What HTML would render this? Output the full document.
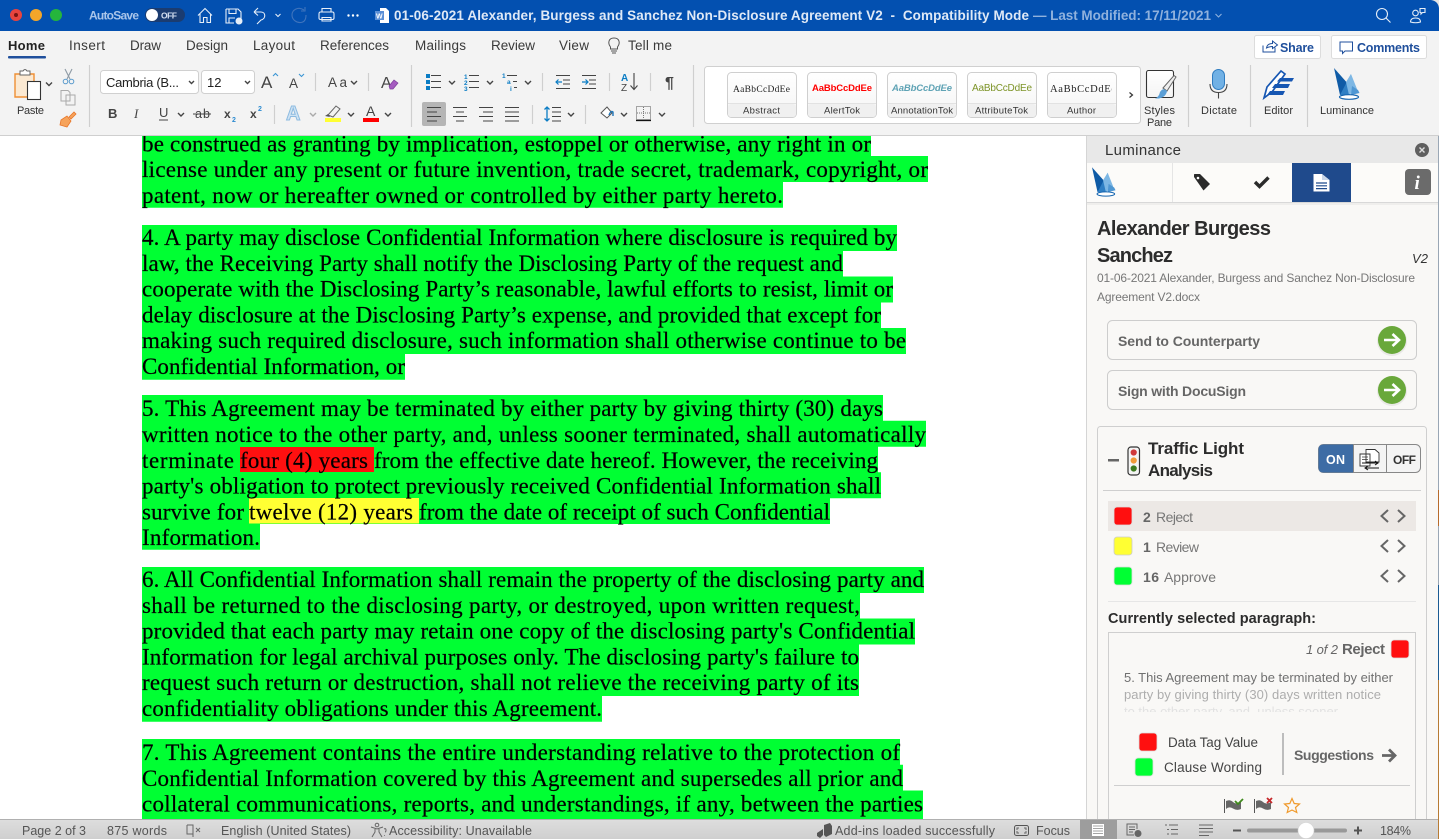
<!DOCTYPE html>
<html lang="en"><head><meta charset="utf-8"><title>Word</title>
<style>
html,body{margin:0;padding:0;background:#fff;overflow:hidden}
svg{display:block;position:absolute;left:0;top:0}
text{font-family:"Liberation Sans",Arial,sans-serif;white-space:pre}
.d{font-family:"Liberation Serif",serif;font-size:23px;fill:#000;stroke:#000;stroke-width:.2}
.t{font-size:13.5px;fill:#3a3a3a}
.r{font-size:10.5px;fill:#333}
.s{font-size:12.5px;fill:#555}
.b{font-weight:bold}
.i{font-style:italic}
.c{fill:none;stroke:#444;stroke-width:1.4}
.l{fill:none;stroke:#444;stroke-width:1.1}
.sep{stroke:#cfcfcf;stroke-width:1.2}
.w{fill:none;stroke:#e6eef8;stroke-width:1.1}
.ar{fill:none;stroke:#fff;stroke-width:2.6}
.nav{fill:none;stroke:#666;stroke-width:2}
.si{fill:none;stroke:#666;stroke-width:1}
</style></head><body>
<svg width="1439" height="839" viewBox="0 0 1439 839" xmlns="http://www.w3.org/2000/svg">
<defs>
<symbol id="logo" viewBox="0 0 26 32" overflow="visible">
<path d="M0 0L15 17 12 27 6 27Z" fill="#0f5ba6"/>
<path d="M6 27L17 6 16 27Z" fill="#2f7fc4"/>
<path d="M12 14L17 6 23 21 15 27Z" fill="#7db7e4"/>
<path d="M18 18L24 22 25.500 25 17 27Z" fill="#4f97d3"/>
<ellipse cx="15" cy="29" rx="9.500" ry="2.300" fill="#fff" stroke="#1766b0" stroke-width="1.200"/>
</symbol>
<linearGradient id="sb" x1="0" y1="0" x2="0" y2="1"><stop offset="0" stop-color="#dedede"/><stop offset="1" stop-color="#cfcfcf"/></linearGradient>
<linearGradient id="th" x1="0" y1="0" x2="0" y2="1"><stop offset="0" stop-color="#fff"/><stop offset="1" stop-color="#f4f4f4"/></linearGradient>
</defs>

<!-- document -->
<rect width="1087" height="839" fill="#fff"/>
<g fill="#00ff33">
<rect x="142" y="130" width="729" height="26"/><rect x="142" y="156" width="786" height="26"/><rect x="142" y="181.750" width="641" height="26"/>
<rect x="142" y="225" width="755" height="26"/><rect x="142" y="250.750" width="701" height="26"/><rect x="142" y="276.500" width="751" height="26"/><rect x="142" y="302.250" width="739" height="26"/><rect x="142" y="328" width="764" height="26"/><rect x="142" y="353.750" width="263" height="26"/>
<rect x="142" y="395" width="741" height="26"/><rect x="142" y="420.750" width="784" height="26"/><rect x="142" y="446.500" width="736" height="26"/><rect x="142" y="472.250" width="739" height="26"/><rect x="142" y="498" width="688" height="26"/><rect x="142" y="523.750" width="118" height="26"/>
<rect x="142" y="567" width="782" height="26"/><rect x="142" y="592.750" width="718" height="26"/><rect x="142" y="618.500" width="773" height="26"/><rect x="142" y="644.250" width="717" height="26"/><rect x="142" y="670" width="717" height="26"/><rect x="142" y="695.750" width="460" height="26"/>
<rect x="142" y="739" width="758" height="26"/><rect x="142" y="764.750" width="761" height="26"/><rect x="142" y="790.500" width="781" height="30"/>
</g>
<rect x="240" y="447" width="134" height="25" fill="#ff1010"/>
<rect x="249" y="498" width="170" height="25.500" fill="#ffff33"/>
<text class="d" x="142" y="151.250" textLength="729">be construed as granting by implication, estoppel or otherwise, any right in or</text>
<text class="d" x="142" y="177" textLength="786">license under any present or future invention, trade secret, trademark, copyright, or</text>
<text class="d" x="142" y="202.750" textLength="641">patent, now or hereafter owned or controlled by either party hereto.</text>
<text class="d" x="142" y="245" textLength="755">4. A party may disclose Confidential Information where disclosure is required by</text>
<text class="d" x="142" y="270.750" textLength="701">law, the Receiving Party shall notify the Disclosing Party of the request and</text>
<text class="d" x="142" y="296.500" textLength="751">cooperate with the Disclosing Party’s reasonable, lawful efforts to resist, limit or</text>
<text class="d" x="142" y="322.250" textLength="739">delay disclosure at the Disclosing Party’s expense, and provided that except for</text>
<text class="d" x="142" y="348" textLength="764">making such required disclosure, such information shall otherwise continue to be</text>
<text class="d" x="142" y="373.750" textLength="263">Confidential Information, or</text>
<text class="d" x="142" y="416" textLength="741">5. This Agreement may be terminated by either party by giving thirty (30) days</text>
<text class="d" x="142" y="441.750" textLength="784">written notice to the other party, and, unless sooner terminated, shall automatically</text>
<text class="d" x="142" y="468" textLength="92">terminate</text>
<text class="d" x="240" y="468" textLength="128">four (4) years</text>
<text class="d" x="374" y="468" textLength="504">from the effective date hereof. However, the receiving</text>
<text class="d" x="142" y="493.250" textLength="739">party's obligation to protect previously received Confidential Information shall</text>
<text class="d" x="142" y="519.500" textLength="102">survive for</text>
<text class="d" x="249" y="519.500" textLength="164">twelve (12) years</text>
<text class="d" x="419" y="519.500" textLength="411">from the date of receipt of such Confidential</text>
<text class="d" x="142" y="544.750" textLength="118">Information.</text>
<text class="d" x="142" y="587" textLength="782">6. All Confidential Information shall remain the property of the disclosing party and</text>
<text class="d" x="142" y="612.750" textLength="718">shall be returned to the disclosing party, or destroyed, upon written request,</text>
<text class="d" x="142" y="638.500" textLength="773">provided that each party may retain one copy of the disclosing party's Confidential</text>
<text class="d" x="142" y="664.250" textLength="717">Information for legal archival purposes only. The disclosing party's failure to</text>
<text class="d" x="142" y="690" textLength="717">request such return or destruction, shall not relieve the receiving party of its</text>
<text class="d" x="142" y="715.750" textLength="460">confidentiality obligations under this Agreement.</text>
<text class="d" x="142" y="760" textLength="758">7. This Agreement contains the entire understanding relative to the protection of</text>
<text class="d" x="142" y="785.750" textLength="761">Confidential Information covered by this Agreement and supersedes all prior and</text>
<text class="d" x="142" y="811.500" textLength="781">collateral communications, reports, and understandings, if any, between the parties</text>

<!-- title bar -->
<rect width="1439" height="31" fill="#0350b0"/>
<circle cx="16" cy="15" r="6" fill="#e8443e"/><circle cx="16" cy="15" r="2" fill="#7a1512"/>
<circle cx="36" cy="15" r="6" fill="#f4a62a"/><circle cx="56" cy="15" r="6" fill="#25b53c"/>
<text x="89" y="19.500" font-size="12" font-weight="bold" fill="#a9c5ea" textLength="50">AutoSave</text>
<rect x="145" y="8" width="40" height="14" rx="7" fill="#1b3c70"/><circle cx="152" cy="15" r="6" fill="#fff"/>
<text x="161" y="18.500" font-size="8.500" font-weight="bold" fill="#d5e0f0" textLength="16">OFF</text>
<path class="w" d="M198 15.500L205 8.500 212 15.500M200 14V22.500H203.500V17.500H207V22.500H210.500V14"/>
<path class="w" d="M226 9H238L241 12V19M226 9V23H234M229 9V13.500H236V9M229 23V18H235"/><circle cx="239" cy="21" r="3.500" fill="#e6eef8"/>
<path class="w" d="M254 12L258 8M254 12L258 15.500M254 12H261C266 12 266 19 261 20L257 24"/>
<path class="w" d="M275.500 14l2.500 2.500 2.500-2.500"/>
<path d="M304 10C298 6 292 10 292 15S297 23 301 22.500 306 19 306 15M305 7V11H301" fill="none" stroke="#3f74bd" stroke-width="1.100"/>
<path class="w" d="M322 12V8.500H331V12M320.500 12H332.500Q334 12 334 14V18Q334 19.500 332.500 19.500H320.500Q319 19.500 319 18V14Q319 12 320.500 12ZM322 17.500H331V21H322Z"/>
<g fill="#fff"><circle cx="348.500" cy="15.500" r="1.200"/><circle cx="353" cy="15.500" r="1.200"/><circle cx="357.500" cy="15.500" r="1.200"/></g>
<path d="M380 8H386L389 11V23H380Z" fill="#fff"/><rect x="375" y="11" width="9" height="9" fill="#5b8fd6"/><text x="376" y="18.500" font-size="7" font-weight="bold" fill="#fff">W</text>
<text x="394" y="20" font-size="13.500" font-weight="bold" fill="#dfe9f6" textLength="635">01-06-2021 Alexander, Burgess and Sanchez Non-Disclosure Agreement V2  -  Compatibility Mode</text>
<text x="1033" y="20" font-size="13.500" font-weight="bold" fill="#8fb1dd" textLength="178">— Last Modified: 17/11/2021</text>
<path d="M1215.500 14l3 3 3-3" fill="none" stroke="#8fb1dd" stroke-width="1.100"/>
<circle cx="1382" cy="14" r="5.500" class="w"/><path class="w" d="M1386 18l4.500 4.500"/>
<circle cx="1415.500" cy="13" r="2.800" class="w"/><path class="w" d="M1410.500 22q0-4 5-4 5 0 5 4-5 1.500-10 0zM1420 8.500h5v4h-2.500l-1.500 1.500v-1.500h-1z"/>
<path d="M1431 0H1439V8Q1438 1 1431 0Z" fill="#e4e4e4"/>

<!-- ribbon -->
<rect y="31" width="1439" height="104" fill="#f3f3f3"/>
<rect y="135" width="1439" height="1" fill="#cfcfcf"/>
<text class="t b" x="8" y="50" style="fill:#222;font-size:13px" textLength="37">Home</text>
<rect x="8" y="56" width="38" height="2.500" rx="1" fill="#1f4f9c"/>
<text class="t" x="69" y="50" textLength="36">Insert</text><text class="t" x="130" y="50" textLength="31">Draw</text><text class="t" x="186" y="50" textLength="42">Design</text><text class="t" x="253" y="50" textLength="42">Layout</text><text class="t" x="320" y="50" textLength="69">References</text><text class="t" x="415" y="50" textLength="51">Mailings</text><text class="t" x="491" y="50" textLength="44">Review</text><text class="t" x="559" y="50" textLength="30">View</text>
<path d="M610.500 47C607.500 43 608.500 38 614 38S620.500 43 617.500 47V49H610.500ZM611 51H617M612 53H616" fill="none" stroke="#555" stroke-width="1"/>
<text class="t" x="628" y="50" textLength="44">Tell me</text>
<rect x="1254.500" y="35.500" width="66" height="23" rx="2" fill="#fff" stroke="#dcdcdc"/>
<rect x="1331.500" y="35.500" width="95" height="23" rx="2" fill="#fff" stroke="#dcdcdc"/>
<path d="M1263 45.500V52H1275V47.500M1266.500 48C1267 44.500 1270 43.500 1272.500 43.500V41L1277.500 45 1272.500 48.500V46.500C1270 46.500 1268 47 1266.500 48Z" fill="none" stroke="#1f4f9c" stroke-width="1"/>
<text x="1280" y="52" font-size="12.500" font-weight="bold" fill="#1f4f9c" textLength="34">Share</text>
<path d="M1340 42H1352.500V51H1345L1342.500 53.500V51H1340Z" fill="none" stroke="#1f4f9c" stroke-width="1"/>
<text x="1357" y="52" font-size="12.500" font-weight="bold" fill="#1f4f9c" textLength="63">Comments</text>

<!-- clipboard -->
<path d="M15 74H34V97H15Z" fill="#fbe9d2" stroke="#ef8f34" stroke-width="1.400"/>
<path d="M20 74V71H23Q25 68 27 71H30V75H20Z" fill="#fff" stroke="#666" stroke-width="1"/>
<rect x="27.500" y="81.500" width="13" height="18" fill="#fff" stroke="#333" stroke-width="1.100"/>
<path class="c" d="M46 82.500l3 3 3-3"/>
<text class="r" x="17" y="114" style="font-size:11px" textLength="27">Paste</text>
<path d="M65 69L70 79M72 69L67 79" fill="none" stroke="#8d9aa5" stroke-width="1.100"/><circle cx="65.500" cy="81.500" r="2.300" fill="none" stroke="#5c9ccd"/><circle cx="71.500" cy="81.500" r="2.300" fill="none" stroke="#5c9ccd"/>
<path d="M61 90.500H68L70 92.500V101H61ZM66 95H75V105H66Z" fill="#f3f3f3" stroke="#aaa"/>
<path d="M69 117L74 112 76 114 71 119ZM61 120L67 116 71 121 67 127 60 125Z" fill="#f6a35b" stroke="#e8772a" stroke-width=".8"/>
<line class="sep" x1="89.500" y1="65" x2="89.500" y2="127"/>

<!-- font -->
<rect x="100.500" y="70.500" width="98" height="23" rx="3" fill="#fff" stroke="#d0d0d0"/>
<text x="106" y="87" font-size="13" fill="#222" textLength="73">Cambria (B...</text><path class="c" d="M189 81l2.500 2.500 2.500-2.500"/>
<rect x="201.500" y="70.500" width="53" height="23" rx="3" fill="#fff" stroke="#d0d0d0"/>
<text x="207" y="87" font-size="13" fill="#222">12</text><path class="c" d="M245 81l2.500 2.500 2.500-2.500"/>
<text x="261" y="88" font-size="17" fill="#444">A</text><path d="M273 76l2.500-2.500 2.500 2.500" fill="none" stroke="#3a95d5" stroke-width="1.100"/>
<text x="289" y="88" font-size="13.500" fill="#444">A</text><path d="M299 74l2.500 2.500 2.500-2.500" fill="none" stroke="#3a95d5" stroke-width="1.100"/>
<line class="sep" x1="315.500" y1="73" x2="315.500" y2="91"/>
<text x="328" y="87" font-size="13.500" fill="#444" textLength="19">Aa</text><path class="c" d="M351 81l3 3 3-3"/>
<line class="sep" x1="368.500" y1="73" x2="368.500" y2="91"/>
<text x="381" y="88" font-size="16" fill="#444">A</text><path d="M389 86L394 80 398 83 393 89H390Z" fill="#a55cc0" stroke="#7d3f9c" stroke-width=".7"/>
<text x="108" y="118" font-size="13" font-weight="bold" fill="#444">B</text>
<text x="134" y="118" font-size="13" font-style="italic" fill="#444" style="font-family:'Liberation Serif'">I</text>
<text x="159" y="117" font-size="13" fill="#444">U</text><path d="M159 120H168" stroke="#444"/>
<path class="c" d="M178 113l3 3 3-3"/>
<text x="195" y="118" font-size="12.500" fill="#444" textLength="15">ab</text><path d="M193 114H211" stroke="#444"/>
<text x="224" y="118" font-size="12" font-weight="bold" fill="#444">x</text><text x="232" y="122" font-size="7" font-weight="bold" fill="#2a8ad0">2</text>
<text x="250" y="118" font-size="12" font-weight="bold" fill="#444">x</text><text x="258" y="111" font-size="7" font-weight="bold" fill="#2a8ad0">2</text>
<line class="sep" x1="274.500" y1="105" x2="274.500" y2="124"/>
<text x="286" y="120" font-size="20" font-weight="bold" fill="#cfe3f4" stroke="#8dbbe0" stroke-width="1">A</text>
<path d="M310 113l3 3 3-3" fill="none" stroke="#aaa" stroke-width="1.400"/>
<path d="M328 115L336 106 340 109 333 117Z" fill="none" stroke="#666"/><rect x="325" y="118" width="16" height="4" fill="#ffff33"/><path d="M325 116l3-2 2 3z" fill="#555"/>
<path class="c" d="M348 113l3 3 3-3"/>
<text x="366" y="116" font-size="14" fill="#444">A</text><rect x="363" y="118" width="16" height="4" fill="#f00"/>
<path class="c" d="M385 113l3 3 3-3"/>
<line class="sep" x1="411.500" y1="65" x2="411.500" y2="127"/>

<!-- paragraph -->
<rect x="426" y="74" width="4" height="4" fill="#0a7cc4"/><rect x="426" y="80" width="4" height="4" fill="#0a7cc4"/><rect x="426" y="86" width="4" height="4" fill="#0a7cc4"/>
<path class="l" d="M431 75.500H441M431 81.500H441M431 87.500H441"/>
<path class="c" d="M449 81l3 3 3-3"/>
<text x="464" y="79" font-size="6.500" font-weight="bold" fill="#0a7cc4">1</text><text x="464" y="85" font-size="6.500" font-weight="bold" fill="#0a7cc4">2</text><text x="464" y="91" font-size="6.500" font-weight="bold" fill="#0a7cc4">3</text>
<path class="l" d="M469 75.500H479M469 81.500H479M469 87.500H479"/>
<path class="c" d="M487 81l3 3 3-3"/>
<text x="502" y="78" font-size="6.500" font-weight="bold" fill="#0a7cc4">1</text><text x="507" y="84" font-size="6.500" font-weight="bold" fill="#0a7cc4">a</text><text x="510" y="91" font-size="6.500" font-weight="bold" fill="#0a7cc4">i</text>
<path class="l" d="M507 75.500H517M513 81.500H517M514 87.500H517"/>
<path class="c" d="M525 81l3 3 3-3"/>
<line class="sep" x1="542.500" y1="73" x2="542.500" y2="91"/>
<path class="l" d="M556 75.500H570M563 80H570M563 84H570M556 88.500H570"/><path d="M562 82H556M558.500 79.500L556 82 558.500 84.500" fill="none" stroke="#0a7cc4" stroke-width="1.200"/>
<path class="l" d="M582 75.500H596M589 80H596M589 84H596M582 88.500H596"/><path d="M582 82H588M585.500 79.500L588 82 585.500 84.500" fill="none" stroke="#0a7cc4" stroke-width="1.200"/>
<line class="sep" x1="609.500" y1="73" x2="609.500" y2="91"/>
<text x="621" y="81" font-size="10" font-weight="bold" fill="#0a7cc4">A</text><text x="621" y="91" font-size="10" fill="#444">Z</text><path class="l" d="M634 73V89M630.500 85.500L634 89.500 637.500 85.500"/>
<line class="sep" x1="650.500" y1="73" x2="650.500" y2="91"/>
<text x="665" y="88" font-size="16" font-weight="bold" fill="#444">¶</text>
<rect x="422" y="102" width="24" height="24" rx="2" fill="#b5b5b5"/>
<path class="l" d="M427 107.500H441M427 112H437M427 116.500H441M427 121H437"/>
<path class="l" d="M453 107.500H467M456 112H464M453 116.500H467M456 121H464"/>
<path class="l" d="M479 107.500H493M483 112H493M479 116.500H493M483 121H493"/>
<path class="l" d="M505 107.500H519M505 112H519M505 116.500H519M505 121H519"/>
<line class="sep" x1="532.500" y1="105" x2="532.500" y2="124"/>
<path class="l" d="M552 107.500H561M552 112H561M552 116.500H561M552 121H561"/>
<path d="M547 107V121M544.500 109.500L547 107 549.500 109.500M544.500 118.500L547 121 549.500 118.500" fill="none" stroke="#0a7cc4" stroke-width="1.300"/>
<path class="c" d="M568 113l3 3 3-3"/>
<line class="sep" x1="585.500" y1="105" x2="585.500" y2="124"/>
<path d="M601 113L607 107 612 113 607 118Z" fill="#fff" stroke="#555"/><path d="M609 115q2-5 4-3v4" fill="none" stroke="#1f75b8" stroke-width="1.400"/>
<path class="c" d="M621 113l3 3 3-3"/>
<rect x="636.500" y="106.500" width="14" height="13" fill="none" stroke="#555" stroke-dasharray="1 1"/><path d="M643.500 107V119M637 113H650" stroke="#777" stroke-dasharray="1 1"/><path d="M636 120.500H651" stroke="#111" stroke-width="1.300"/>
<path class="c" d="M659 113l3 3 3-3"/>
<line class="sep" x1="693.500" y1="65" x2="693.500" y2="127"/>

<!-- gallery -->
<rect x="704.500" y="66.500" width="436" height="57" rx="3" fill="#fff" stroke="#d0d0d0"/>
<g stroke="#cfcfcf" fill="url(#th)">
<rect x="727.500" y="72.500" width="69" height="45" rx="4"/><rect x="807.500" y="72.500" width="69" height="45" rx="4"/><rect x="887.500" y="72.500" width="69" height="45" rx="4"/><rect x="967.500" y="72.500" width="69" height="45" rx="4"/><rect x="1047.500" y="72.500" width="69" height="45" rx="4"/>
</g>
<g fill="#f0f0f0"><rect x="728" y="104" width="68" height="13" rx="3"/><rect x="808" y="104" width="68" height="13" rx="3"/><rect x="888" y="104" width="68" height="13" rx="3"/><rect x="968" y="104" width="68" height="13" rx="3"/><rect x="1048" y="104" width="68" height="13" rx="3"/></g>
<g stroke="#e2e2e2"><path d="M728 103.500H796M808 103.500H876M888 103.500H956M968 103.500H1036M1048 103.500H1116"/></g>
<text x="733" y="92" font-size="9.500" fill="#222" textLength="57" style="font-family:'Liberation Serif'">AaBbCcDdEe</text>
<text x="812" y="91" font-size="9.500" font-weight="bold" fill="#f00" textLength="60">AaBbCcDdEe</text>
<text x="892" y="91" font-size="9.500" font-weight="bold" font-style="italic" fill="#5fa3b5" textLength="60">AaBbCcDdEe</text>
<text x="972" y="91" font-size="10" fill="#7d9428" textLength="60">AaBbCcDdEe</text>
<svg x="1050" y="75" width="62" height="25"><text x="0" y="17" font-size="10.500" fill="#222" textLength="66" style="font-family:'Liberation Serif'">AaBbCcDdEe</text></svg>
<text class="r" x="743" y="113.500" style="font-size:9.500px" textLength="37">Abstract</text>
<text class="r" x="824" y="113.500" style="font-size:9.500px" textLength="36">AlertTok</text>
<text class="r" x="891" y="113.500" style="font-size:9.500px" textLength="62">AnnotationTok</text>
<text class="r" x="975" y="113.500" style="font-size:9.500px" textLength="53">AttributeTok</text>
<text class="r" x="1067" y="113.500" style="font-size:9.500px" textLength="29">Author</text>
<path d="M1129.500 92.500l3 2.500-3 2.500" fill="none" stroke="#333" stroke-width="1.200"/>

<!-- right ribbon -->
<rect x="1146.500" y="70.500" width="27" height="27" rx="2" fill="url(#th)" stroke="#333" stroke-width="1.100"/>
<path d="M1163 88L1174 75.500 1176 77 1167 91Z" fill="#eee" stroke="#666"/>
<path d="M1155 98.500Q1159 97 1160 92 1163 87 1167 91 1166 97 1159 98.500Z" fill="#5b9fd6"/>
<text class="r" x="1144" y="114" style="font-size:11px" textLength="31">Styles</text><text class="r" x="1147" y="126" style="font-size:11px" textLength="25">Pane</text>
<line class="sep" x1="1188.500" y1="65" x2="1188.500" y2="127"/>
<rect x="1212.500" y="69.500" width="12" height="20" rx="6" fill="#71b1e5" stroke="#2f7cc0"/>
<path class="l" d="M1210 84Q1210 92.500 1218.500 92.500T1227 84M1218.500 92.500V98.500"/>
<text class="r" x="1201" y="114" style="font-size:11px" textLength="36">Dictate</text>
<line class="sep" x1="1250.500" y1="65" x2="1250.500" y2="127"/>
<path d="M1264 98L1267 87 1281 71 1285 74 1272 92Z" fill="#fff" stroke="#1656b2" stroke-width="1.700"/>
<path d="M1280 78H1294L1292 81.500H1277ZM1275 84H1290L1288 88H1272ZM1270 91H1285L1283 95H1267Z" fill="#1656b2"/>
<text class="r" x="1264" y="114" style="font-size:11px" textLength="29">Editor</text>
<line class="sep" x1="1307.500" y1="65" x2="1307.500" y2="127"/>
<use href="#logo" x="1334" y="68" width="26" height="32"/>
<text class="r" x="1320" y="114" style="font-size:11px" textLength="54">Luminance</text>

<!-- sidebar -->
<rect x="1087" y="136" width="352" height="703" fill="#f9f8f6"/>
<rect x="1086" y="136" width="1" height="703" fill="#d5d5d5"/>
<rect x="1087" y="136" width="352" height="27" fill="#e8e8e8"/>
<text x="1105" y="155" font-size="15" fill="#333" textLength="76">Luminance</text>
<circle cx="1422" cy="150" r="7" fill="#5f5f5f"/><path d="M1419.500 147.500l5 5m0-5l-5 5" stroke="#ddd" stroke-width="1.400"/>
<rect x="1087" y="163" width="352" height="39" fill="#fcfbf9"/>
<rect x="1087" y="202" width="352" height="1" fill="#d8d8d8"/><rect x="1087" y="203" width="352" height="2" fill="#efeeec"/>
<use href="#logo" x="1092" y="167" width="24" height="30"/>
<line x1="1172.500" y1="163" x2="1172.500" y2="202" stroke="#e5e5e5"/>
<path d="M1194 177V174.500Q1194 174 1195 174H1200L1210 184 1203.500 190.500Z" fill="#2b2b2b"/><circle cx="1198" cy="178" r="1.300" fill="#fff"/>
<path d="M1255 182L1259.500 186.500 1268.500 177.500" fill="none" stroke="#2b2b2b" stroke-width="3.400"/>
<rect x="1292" y="163" width="59" height="39" fill="#1f4a8c"/>
<path d="M1313.500 174H1322L1329.500 180V191.500H1313.500Z" fill="#fff"/><path d="M1316 183H1327M1316 185.800H1327M1316 188.600H1327" stroke="#1f4a8c" stroke-width="1.200"/><path d="M1322 174V180H1329.500Z" fill="#c9d6e8"/>
<rect x="1405" y="169" width="26" height="26" rx="4" fill="#6b6b6b"/>
<text x="1414.500" y="189" style="font-family:'Liberation Serif'" font-size="19" font-weight="bold" font-style="italic" fill="#fff">i</text>
<text x="1097" y="235" font-size="20" font-weight="bold" fill="#2c2c2c" textLength="174">Alexander Burgess</text>
<text x="1097" y="262" font-size="20" font-weight="bold" fill="#2c2c2c" textLength="76">Sanchez</text>
<text x="1412" y="263" font-size="13" font-style="italic" fill="#333" textLength="16">V2</text>
<text x="1097" y="282" font-size="12" fill="#777" textLength="318">01-06-2021 Alexander, Burgess and Sanchez Non-Disclosure</text>
<text x="1097" y="301" font-size="12" fill="#777" textLength="103">Agreement V2.docx</text>
<rect x="1107.500" y="320.500" width="309" height="39" rx="5" fill="#f9f8f6" stroke="#cdcdcd"/>
<text x="1118" y="346" font-size="14" font-weight="bold" fill="#666" textLength="142">Send to Counterparty</text>
<circle cx="1392" cy="341" r="15" fill="#e9e8e6"/><circle cx="1392" cy="340" r="14" fill="#69a83a"/>
<path class="ar" d="M1384 340H1398M1392.500 334L1399 340 1392.500 346"/>
<rect x="1107.500" y="370.500" width="309" height="39" rx="5" fill="#f9f8f6" stroke="#cdcdcd"/>
<text x="1118" y="396" font-size="14" font-weight="bold" fill="#666" textLength="128">Sign with DocuSign</text>
<circle cx="1392" cy="391" r="15" fill="#e9e8e6"/><circle cx="1392" cy="390" r="14" fill="#69a83a"/>
<path class="ar" d="M1384 390H1398M1392.500 384L1399 390 1392.500 396"/>

<!-- panel -->
<rect x="1097.500" y="426.500" width="329" height="430" rx="3" fill="#f9f8f6" stroke="#cfcfcf"/>
<rect x="1108" y="459" width="11" height="2.500" fill="#666"/>
<rect x="1128" y="447" width="11.500" height="28" rx="3" fill="#f4f4f4" stroke="#333" stroke-width="1.200"/>
<circle cx="1133.700" cy="452.500" r="3.100" fill="#d0393a"/><circle cx="1133.700" cy="460.500" r="3.100" fill="#f19a38"/><circle cx="1133.700" cy="468.500" r="3.100" fill="#3d7a1f"/>
<text x="1148" y="454" font-size="17" font-weight="bold" fill="#2c2c2c" textLength="96">Traffic Light</text>
<text x="1148" y="476" font-size="17" font-weight="bold" fill="#2c2c2c" textLength="65">Analysis</text>
<rect x="1318.500" y="444.500" width="102" height="28" rx="5" fill="#f4f4f4" stroke="#888"/>
<path d="M1353 444.500V472.500H1323.500Q1318.500 472.500 1318.500 467.500V449.500Q1318.500 444.500 1323.500 444.500Z" fill="#3d6ca5"/>
<path d="M1353.500 445V472M1386.500 445V472" stroke="#888"/>
<text x="1326" y="464" font-size="12.500" font-weight="bold" fill="#fff" textLength="19">ON</text>
<text x="1393" y="464" font-size="12" font-weight="bold" fill="#333" textLength="23">OFF</text>
<path d="M1366 449.500H1375L1379 453V462H1366ZM1360 454H1370V466H1360Z" fill="#fff" stroke="#333" stroke-width=".9"/>
<path d="M1362 457H1368M1362 459.500H1368" stroke="#333" stroke-width=".7"/>
<path d="M1362 463H1378M1375 461l3 2-3 2M1379 468H1365M1368 466l-3 2 3 2" fill="none" stroke="#111" stroke-width="1"/>
<rect x="1103" y="490" width="318" height="1" fill="#cfcfcf"/>
<rect x="1108" y="501" width="308" height="30" fill="#ece8e5"/>
<rect x="1114" y="507" width="18" height="18" rx="3" fill="#ff0f0f" stroke="#ddd" stroke-width=".8"/>
<rect x="1114" y="537" width="18" height="18" rx="3" fill="#ffff33" stroke="#ccc" stroke-width=".8"/>
<rect x="1114" y="567" width="18" height="18" rx="3" fill="#00ff33" stroke="#ddd" stroke-width=".8"/>
<text x="1143" y="522" font-size="14" font-weight="bold" fill="#666">2</text><text x="1156" y="522" font-size="14" fill="#777" textLength="37">Reject</text>
<text x="1143" y="552" font-size="14" font-weight="bold" fill="#666">1</text><text x="1156" y="552" font-size="14" fill="#777" textLength="43">Review</text>
<text x="1143" y="582" font-size="14" font-weight="bold" fill="#666" textLength="16">16</text><text x="1164" y="582" font-size="14" fill="#777" textLength="52">Approve</text>
<path class="nav" d="M1388 510L1381.500 516 1388 522M1398 510L1404.500 516 1398 522M1388 540L1381.500 546 1388 552M1398 540L1404.500 546 1398 552M1388 570L1381.500 576 1388 582M1398 570L1404.500 576 1398 582"/>
<rect x="1108" y="601" width="308" height="1" fill="#e6e6e6"/>
<text x="1108" y="623" font-size="14.500" font-weight="bold" fill="#2c2c2c" textLength="208">Currently selected paragraph:</text>
<rect x="1108.500" y="632.500" width="307" height="220" fill="#f9f8f6" stroke="#cfcfcf"/>
<text x="1306" y="654" font-size="13" font-style="italic" fill="#666" textLength="32">1 of 2</text>
<text x="1342" y="654" font-size="15" font-weight="bold" fill="#666" textLength="43">Reject</text>
<rect x="1391" y="640" width="18" height="18" rx="3" fill="#ff0f0f" stroke="#ddd" stroke-width=".8"/>
<text x="1124" y="682" font-size="13" fill="#707070" textLength="269">5. This Agreement may be terminated by either</text>
<text x="1124" y="699" font-size="13" fill="#adadad" textLength="257">party by giving thirty (30) days written notice</text>
<text x="1124" y="716" font-size="13" fill="#e2e2e2" textLength="214">to the other party, and, unless sooner</text>
<rect x="1110" y="712" width="300" height="10" fill="#f9f8f6"/>
<rect x="1139" y="733" width="18" height="18" rx="3" fill="#ff0f0f" stroke="#ddd" stroke-width=".8"/>
<rect x="1135" y="758" width="18" height="18" rx="3" fill="#00ff33" stroke="#ddd" stroke-width=".8"/>
<text x="1168" y="747" font-size="13.500" fill="#444" textLength="90">Data Tag Value</text>
<text x="1164" y="772" font-size="13.500" fill="#444" textLength="98">Clause Wording</text>
<rect x="1282" y="733" width="2" height="42" fill="#bdbdbd"/>
<text x="1294" y="760" font-size="14" font-weight="bold" fill="#666" textLength="80">Suggestions</text>
<path d="M1382 755.500H1394M1389 749.500L1395 755.500 1389 761.500" fill="none" stroke="#666" stroke-width="2.800"/>
<rect x="1114" y="785" width="296" height="1" fill="#cfcfcf"/>
<path d="M1224.500 799V813" stroke="#555"/><path d="M1226 801Q1230 799 1233 802T1241 802V809Q1237 811 1233 808.500T1226 809Z" fill="#666"/><path d="M1235 801l3 3 5-5" fill="none" stroke="#3f8a1c" stroke-width="1.800"/>
<path d="M1254.500 799V813" stroke="#555"/><path d="M1256 801Q1260 799 1263 802T1271 802V809Q1267 811 1263 808.500T1256 809Z" fill="#666"/><path d="M1267 798l5 5m0-5l-5 5" stroke="#c6282b" stroke-width="1.800"/>
<path d="M1292 798.500L1294.200 803.500 1299.500 804 1295.500 807.500 1296.800 812.500 1292 810 1287.200 812.500 1288.500 807.500 1284.500 804 1289.800 803.500Z" fill="none" stroke="#f09a2c" stroke-width="1.200"/>

<!-- status bar -->
<rect y="819" width="1439" height="20" fill="url(#sb)"/><rect y="819" width="1439" height="1" fill="#b0b0b0"/>
<text class="s" x="22" y="835" textLength="64">Page 2 of 3</text>
<text class="s" x="107" y="835" textLength="60">875 words</text>
<path class="si" d="M187 825H193V837M193 825V837M187 825V834H193M196 828l4 4m0-4l-4 4"/>
<text class="s" x="221" y="835" textLength="130">English (United States)</text>
<circle cx="377" cy="825" r="1.800" class="si"/><path class="si" d="M371 827L377 829 383 827M375 829V832L372 837M379 829V832L382 837"/><path d="M384 829q2-1 2 1t-1 2M384.500 835v.8" class="si"/>
<text class="s" x="389" y="835" textLength="143">Accessibility: Unavailable</text>
<path d="M817 833L823 829V835L820 838 817 836ZM824 825L830 823 832 826V834L826 837 824 835Z" fill="#555"/>
<text class="s" x="835" y="835" textLength="160">Add-ins loaded successfully</text>
<rect x="1014.500" y="825.500" width="14" height="10" rx="2" fill="none" stroke="#555"/><path class="si" d="M1017 830V828H1019M1024 828H1026V830M1026 831V833H1024M1019 833H1017V831"/>
<text class="s" x="1036" y="835" textLength="34">Focus</text>
<rect x="1080" y="820" width="37" height="19" fill="#9d9d9d"/>
<rect x="1092" y="824" width="12" height="12" fill="#fff"/><path d="M1093 826H1103M1093 828.500H1103M1093 831H1103M1093 833.500H1103" stroke="#888" stroke-width=".8"/>
<path class="si" d="M1134 835H1127V824H1137V829M1129 827H1135M1129 829.500H1135M1129 832H1133"/><circle cx="1138" cy="833.500" r="3.500" fill="#666"/>
<path class="si" d="M1165 825H1167M1169 825H1178M1167 829.500H1169M1171 829.500H1178M1167 834H1169M1171 834H1178"/>
<path class="si" d="M1199 825H1213M1199 828.500H1213M1199 832H1213M1199 835.500H1209"/>
<rect x="1233" y="829.500" width="8" height="2" fill="#555"/>
<rect x="1247" y="828.500" width="100" height="4" rx="2" fill="#999"/>
<circle cx="1306" cy="830.500" r="8" fill="#fff" stroke="#d5d5d5" stroke-width=".6"/>
<path d="M1354 830.500H1362M1358 826.500V834.500" stroke="#555" stroke-width="2"/>
<text class="s" x="1380" y="835" textLength="31">184%</text>

<!-- desktop sliver -->
<rect x="1438" y="136" width="1" height="703" fill="#9aa7b5"/>
<rect x="1438" y="490" width="1" height="36" fill="#b76b2c"/><rect x="1438" y="585" width="1" height="254" fill="#1b5b93"/><rect x="1438" y="680" width="1" height="159" fill="#b77b34"/>
</svg>
</body></html>
